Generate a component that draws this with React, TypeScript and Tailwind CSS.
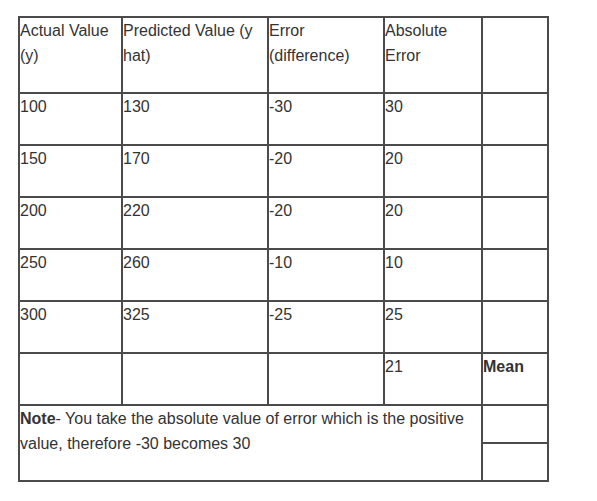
import { Fragment } from 'react';

const rows = [
  ['100', '130', '-30', '30'],
  ['150', '170', '-20', '20'],
  ['200', '220', '-20', '20'],
  ['250', '260', '-10', '10'],
  ['300', '325', '-25', '25'],
];

function Cell({ children, className = '' }: { children?: React.ReactNode; className?: string }) {
  return <div className={`bg-white leading-[25px] ${className}`}>{children}</div>;
}

export default function App() {
  return (
    <div className="min-h-[501px] bg-white pl-[18px] pt-[16px] font-['Liberation_Sans',Arial,sans-serif] text-[16px] text-[#333]">
      <div className="inline-grid grid-cols-[101px_144px_114px_96px_64px] grid-rows-[74px_repeat(6,50px)_36px_36px] gap-[2px] bg-[#4b4b4b] p-[2px]">
        <Cell>Actual Value<br />(y)</Cell>
        <Cell>Predicted Value (y<br />hat)</Cell>
        <Cell>Error<br />(difference)</Cell>
        <Cell>Absolute<br />Error</Cell>
        <Cell />
        {rows.map((r, i) => (
          <Fragment key={i}>
            {r.map((v, j) => (
              <Cell key={j}>{v}</Cell>
            ))}
            <Cell />
          </Fragment>
        ))}
        <Cell />
        <Cell />
        <Cell />
        <Cell>21</Cell>
        <Cell className="font-bold">Mean</Cell>
        <Cell className="col-span-4 row-span-2">
          <b>Note</b>- You take the absolute value of error which is the positive
          <br />
          value, therefore -30 becomes 30
        </Cell>
        <Cell />
        <Cell />
      </div>
    </div>
  );
}
